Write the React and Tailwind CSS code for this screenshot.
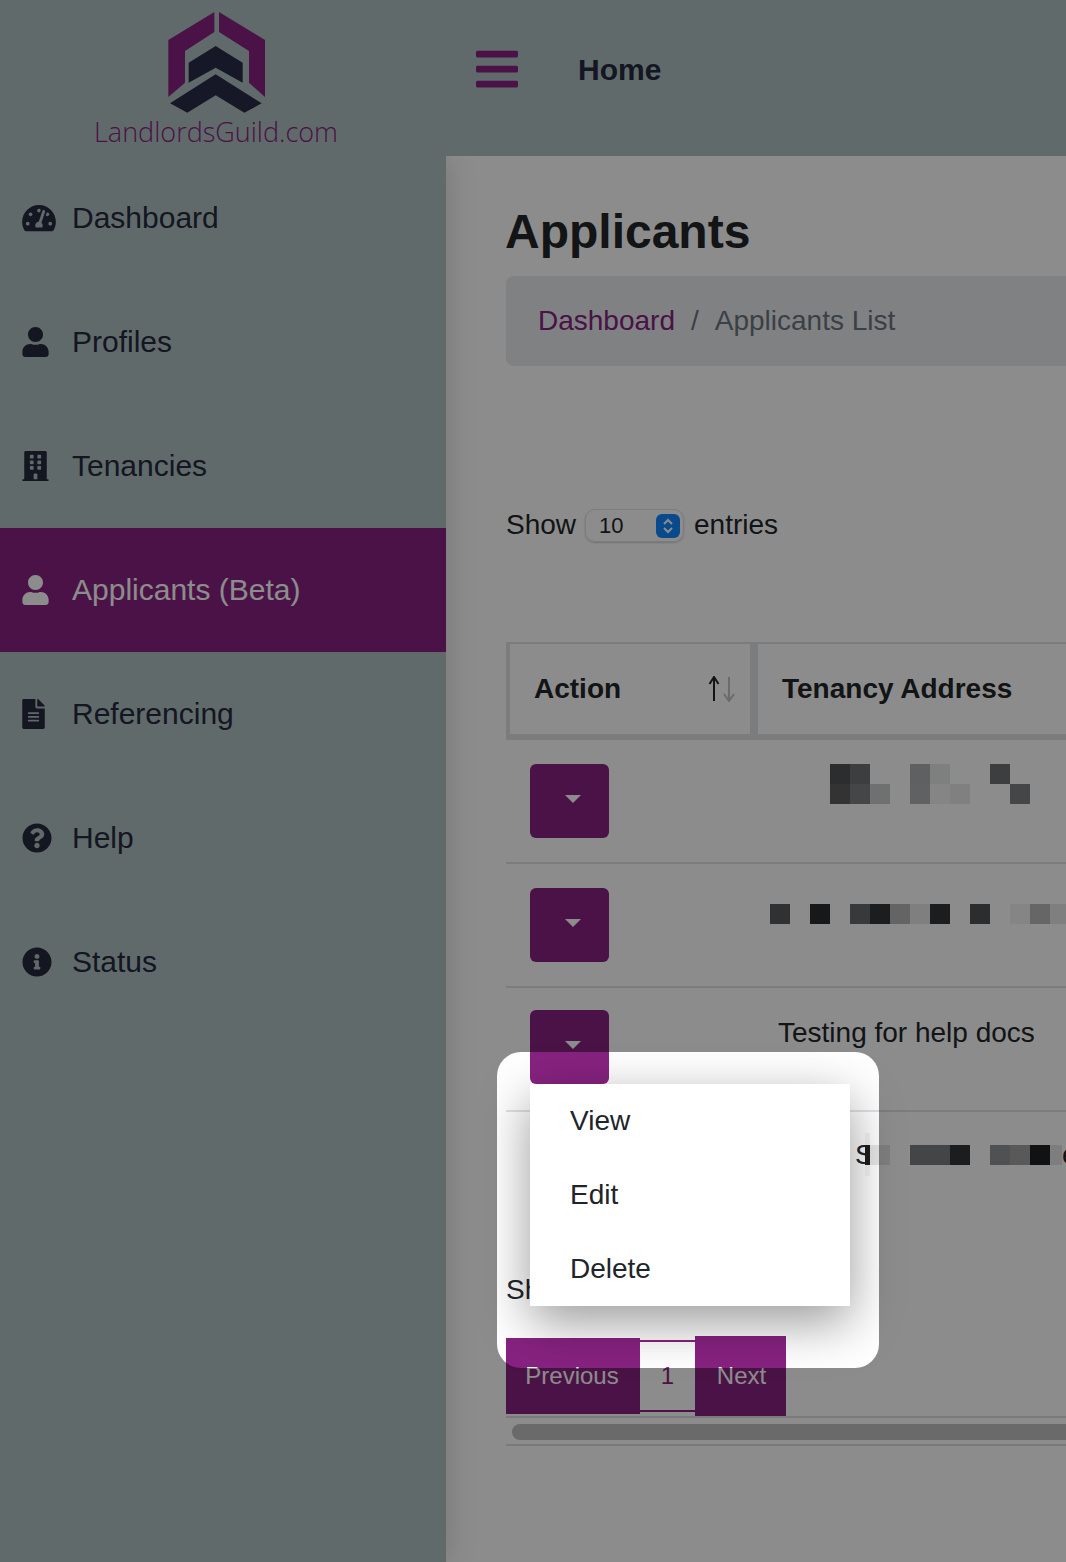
import React from 'react';
import {
  FaBars,
  FaBuilding,
  FaFileAlt,
  FaInfoCircle,
  FaQuestionCircle,
  FaTachometerAlt,
  FaUser,
} from 'react-icons/fa';

const navItems = [
  { label: 'Dashboard', Icon: FaTachometerAlt, size: 'w-[34px] h-[30px]' },
  { label: 'Profiles', Icon: FaUser, size: 'w-[27px] h-[30px]' },
  { label: 'Tenancies', Icon: FaBuilding, size: 'w-[27px] h-[30px]' },
  { label: 'Applicants (Beta)', Icon: FaUser, size: 'w-[27px] h-[30px]', active: true },
  { label: 'Referencing', Icon: FaFileAlt, size: 'w-[23px] h-[30px]' },
  { label: 'Help', Icon: FaQuestionCircle, size: 'w-[30px] h-[30px]' },
  { label: 'Status', Icon: FaInfoCircle, size: 'w-[30px] h-[30px]' },
];

// Redacted addresses: each cell is 20px wide, null leaves a gap
const rowOnePixels = [
  [null, null, null, 'bg-[#505257]', 'bg-[#6f7174]', null, null, 'bg-[#adafb1]', 'bg-[#e6e7e8]', null, null, 'bg-[#6f7174]', null],
  [null, null, null, 'bg-[#5d5d60]', 'bg-[#7e8083]', 'bg-[#cacdcc]', null, 'bg-[#afb1b3]', 'bg-[#f0f2f0]', 'bg-[#e7e9e7]', null, null, 'bg-[#7e8083]'],
];

const rowTwoPixels = [
  ['bg-[#57595e]', null, 'bg-[#2a2c2f]', null, 'bg-[#66686b]', 'bg-[#333538]', 'bg-[#b4b6b4]', 'bg-[#e7e7e7]', 'bg-[#333538]', null, 'bg-[#505256]', null, 'bg-[#f0f2f0]', 'bg-[#b9bbb9]', 'bg-[#e8e8e8]'],
];

const Pixels = ({ lines }) => (
  <div className="ml-3">
    {lines.map((cells, i) => (
      <div key={i} className="flex">
        {cells.map((cell, j) => (
          <div key={j} className={`w-5 h-5 shrink-0 ${cell || ''}`} />
        ))}
      </div>
    ))}
  </div>
);

const Logo = () => (
  <div className="flex flex-col items-center">
    <svg viewBox="0 0 420 375" className="w-[140px] h-[125px] mt-3 ml-2">
      <g transform="translate(0 -38)">
        <polygon fill="#872280" points="193,38 193,98 105,155 105,250 55,293 55,122" />
        <polygon fill="#872280" points="207,38 345,122 345,293 297,250 297,155 207,98" />
        <polygon fill="#282c47" points="197,140 278,190 278,250 197,205 116,250 116,190" />
        <polygon fill="#282c47" points="197,225 335,312 283,340 197,288 112,340 60,312" />
      </g>
    </svg>
    <div className="font-['Open_Sans',sans-serif] font-light text-[27px] leading-[30px] text-[#872280] -mt-5">
      LandlordsGuild.com
    </div>
  </div>
);

const ActionButton = () => (
  <div className="w-[79px] h-[74px] rounded-md bg-[#872280] flex items-center justify-center pl-[7px] pb-1">
    <div className="w-0 h-0 border-x-8 border-t-8 border-x-transparent border-t-white" />
  </div>
);

const SortArrows = () => (
  <svg viewBox="0 0 27 26" className="w-[27px] h-[26px]" fill="none" strokeWidth="2">
    <path d="M6 25V2M1.5 8L6 1l4.5 7" stroke="#212529" />
    <path d="M21 1v23M16 18l5 7 5-7" stroke="#c4c4c4" />
  </svg>
);

const Stepper = () => (
  <div className="w-6 h-6 rounded-[6px] bg-[#1287ff] flex items-center justify-center">
    <svg viewBox="0 0 12 18" className="w-3 h-[18px]" fill="none" stroke="white" strokeWidth="2">
      <path d="M2 7l4-4 4 4M2 11l4 4 4-4" />
    </svg>
  </div>
);

const App = () => {
  return (
    <div className="relative h-[1562px] overflow-hidden bg-white text-[#212529] font-['Liberation_Sans',Arial,sans-serif]">
      {/* Top bar */}
      <header className="relative z-20 flex h-[156px] bg-[#b0c1c3]">
        <div className="w-[446px] shrink-0 flex justify-center pr-[14px]">
          <Logo />
        </div>
        <div className="flex items-center h-[138px] pl-[30px]">
          <FaBars className="w-[42px] h-[48px] text-[#872280]" />
          <span className="ml-[60px] text-[30px] font-bold text-[#25283c]">Home</span>
        </div>
      </header>

      <div className="flex h-[1406px]">
        {/* Sidebar */}
        <aside className="relative z-10 w-[446px] shrink-0 bg-[#b0c1c3] shadow-[0_0_30px_rgba(0,0,0,0.16)]">
          {navItems.map(({ label, Icon, size, active }) => (
            <div
              key={label}
              className={`flex items-center h-[124px] pl-[22px] text-[30px] ${
                active ? 'bg-[#872280] text-white' : 'text-[#25283c]'
              }`}
            >
              <div className="w-[50px] shrink-0">
                <Icon className={size} />
              </div>
              <span className="pb-[2px]">{label}</span>
            </div>
          ))}
        </aside>

        {/* Page content */}
        <main className="flex-1 overflow-hidden pl-[60px] pt-[48px]">
          <div className="w-[800px]">
            <h1 className="text-[48px] leading-[56px] font-bold -ml-px">Applicants</h1>

            <div className="mt-4 h-[90px] rounded-lg bg-[#e9ecef] flex items-center pl-8 text-[28px]">
              <span className="text-[#872280]">Dashboard</span>
              <span className="mx-4 text-[#6c757d]">/</span>
              <span className="text-[#6c757d]">Applicants List</span>
            </div>

            <div className="mt-[143px] flex items-center h-[33px] text-[28px]">
              <span className="pb-[2px]">Show</span>
              <div className="ml-[9px] mr-[10px] w-[99px] h-[33px] rounded-[10px] border border-[#e2e2e2] shadow-[0_1px_2px_rgba(0,0,0,0.2)] flex items-center justify-between pl-[13px] pr-[3px] text-[22px]">
                10
                <Stepper />
              </div>
              <span className="pb-[2px]">entries</span>
            </div>

            {/* Table */}
            <div className="mt-[100px]">
              <div className="flex h-[98px] text-[28px] font-bold border-t-2 border-b-[6px] border-[#dee2e6]">
                <div className="w-[252px] shrink-0 flex items-center justify-between border-l-4 border-r-8 border-[#dee2e6] pl-6 pr-[15px]">
                  Action
                  <SortArrows />
                </div>
                <div className="pl-6 flex items-center">Tenancy Address</div>
              </div>

              <div className="flex h-[124px] border-b-2 border-[#dee2e6]">
                <div className="w-[252px] shrink-0 pl-6 pt-6">
                  <ActionButton />
                </div>
                <div className="pt-6">
                  <Pixels lines={rowOnePixels} />
                </div>
              </div>

              <div className="flex h-[124px] border-b-2 border-[#dee2e6]">
                <div className="w-[252px] shrink-0 pl-6 pt-6">
                  <ActionButton />
                </div>
                <div className="pt-10">
                  <Pixels lines={rowTwoPixels} />
                </div>
              </div>

              <div className="flex h-[124px] border-b-2 border-[#dee2e6]">
                <div className="w-[252px] shrink-0 pl-6 pt-[22px]">
                  <div className="relative">
                    <ActionButton />
                    <div className="absolute z-10 left-0 top-[74px] w-[320px] bg-white text-[28px] shadow-[0_16px_48px_rgba(0,0,0,0.4)]">
                      {['View', 'Edit', 'Delete'].map((item) => (
                        <div key={item} className="h-[74px] flex items-center pl-10">
                          {item}
                        </div>
                      ))}
                    </div>
                  </div>
                </div>
                <div className="pt-[25px] pl-5 text-[28px] leading-10">Testing for help docs</div>
              </div>

              <div className="flex h-[124px]">
                <div className="w-[252px] shrink-0 pl-6 pt-6">
                  <ActionButton />
                </div>
                <div className="pt-[21px] pl-[97px] flex items-center h-[64px] text-[28px]">
                  <div className="w-[10px] leading-5">S</div>
                  <div className="relative w-[5px] h-[43px] flex flex-col bg-[#f4f4f4] justify-center">
                    <div className="h-5 bg-[#1c1d1f]" />
                  </div>
                  <div className="w-5 h-5 bg-[#e6e6e6]" />
                  <div className="w-5 h-5" />
                  <div className="w-10 h-5 bg-[#7c7e80]" />
                  <div className="w-5 h-5 bg-[#333538]" />
                  <div className="w-5 h-5" />
                  <div className="w-5 h-5 bg-[#929496]" />
                  <div className="w-5 h-5 bg-[#a0a2a0]" />
                  <div className="w-5 h-5 bg-[#1f2124]" />
                  <div className="w-3 h-5 bg-[#e6e6e6]" />
                  <div className="leading-5">e</div>
                </div>
              </div>
            </div>

            <div className="mt-[34px] text-[28px] leading-10 whitespace-nowrap">Showing 1 to 4 of 4 entries</div>

            {/* Pagination */}
            <div className="mt-[26px] flex items-center h-20 text-[24px]">
              <div className="w-[134px] h-[76px] bg-[#872280] text-white flex items-center justify-center pr-[2px]">Previous</div>
              <div className="w-[55px] h-[72px] border-y-2 border-[#872280] text-[#872280] flex items-center justify-center">1</div>
              <div className="w-[91px] h-20 bg-[#872280] text-white flex items-center justify-center pl-[2px]">Next</div>
            </div>

            {/* Horizontal scrollbar */}
            <div className="h-[30px] border-y-2 border-[#dedede] pt-[6px] pl-[6px]">
              <div className="h-4 rounded-full bg-[#c1c1c1]" />
            </div>
          </div>
        </main>
      </div>

      {/* Tour spotlight: dims everything outside the cut-out */}
      <div className="absolute z-30 left-[497px] top-[1052px] w-[382px] h-[316px] rounded-[24px] pointer-events-none shadow-[0_0_0_3000px_rgba(0,0,0,0.45)]" />
    </div>
  );
};

export default App;
